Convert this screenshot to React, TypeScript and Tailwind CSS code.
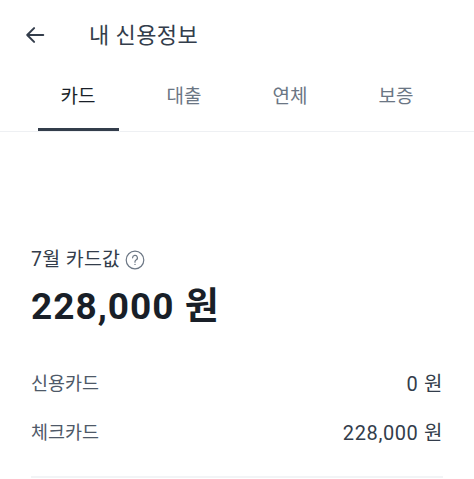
import React from "react";

const tabs = ["카드", "대출", "연체", "보증"];

const rows = [
  { label: "신용카드", value: "0 원" },
  { label: "체크카드", value: "228,000 원" },
];

const App = () => {
  return (
    <div
      className="w-[474px] h-[479px] bg-white overflow-hidden text-[#191f28]"
      style={{ fontFamily: 'Roboto, "Noto Sans CJK KR", sans-serif' }}
    >
      <div className="h-[70px] flex items-center pl-[24px]">
        <svg width="22" height="22" viewBox="0 0 24 24" fill="none" stroke="#333d4b" strokeWidth="2.2" strokeLinecap="round" strokeLinejoin="round">
          <path d="M21 12H3.5M11 4.5L3.5 12L11 19.5" />
        </svg>
        <h1 className="ml-[43px] mt-[1px] text-[22px] tracking-[0.4px] text-[#333d4b] leading-none">내 신용정보</h1>
      </div>
      <div className="flex px-[25px] border-b border-[#eef0f3]">
        {tabs.map((t, i) => (
          <div key={t} className="w-[106px] flex flex-col items-center">
            <div
              className={
                "h-[58px] pb-[3px] flex items-center text-[19px] " +
                (i === 0 ? "text-[#191f28]" : "text-[#6b7684]")
              }
            >
              {t}
            </div>
            <div className={"h-[3px] w-[81px] " + (i === 0 ? "bg-[#333d4b]" : "bg-transparent")} />
          </div>
        ))}
      </div>
      <div className="px-[31px] pt-[118px]">
        <div className="flex items-center gap-[5px] text-[19.5px] tracking-[0.3px] text-[#333d4b] leading-none">
          <span>7월 카드값</span>
          <svg width="20" height="20" viewBox="0 0 20 20" fill="none" stroke="#6b7684" strokeWidth="1.2">
            <circle cx="10" cy="10" r="8.8" />
            <path d="M7.6 7.8a2.4 2.4 0 1 1 3.4 2.2c-.7.4-1 .8-1 1.6v.6" strokeLinecap="round" />
            <circle cx="10" cy="14.4" r=".7" fill="#6b7684" stroke="none" />
          </svg>
        </div>
        <div className="mt-[18px] text-[37px] font-bold tracking-[1px] leading-none">228,000 원</div>
        <div className="mt-[48px] flex flex-col gap-[27px]">
          {rows.map((r) => (
            <div key={r.label} className="h-[22px] flex justify-between items-center leading-none">
              <span className="text-[#4e5968] text-[18.5px]">{r.label}</span>
              <span className="text-[#333d4b] text-[20px] tracking-[0.6px]">{r.value}</span>
            </div>
          ))}
        </div>
        <div className="mt-[32px] h-[2px] bg-[#f2f4f6]" />
      </div>
    </div>
  );
};

export default App;
